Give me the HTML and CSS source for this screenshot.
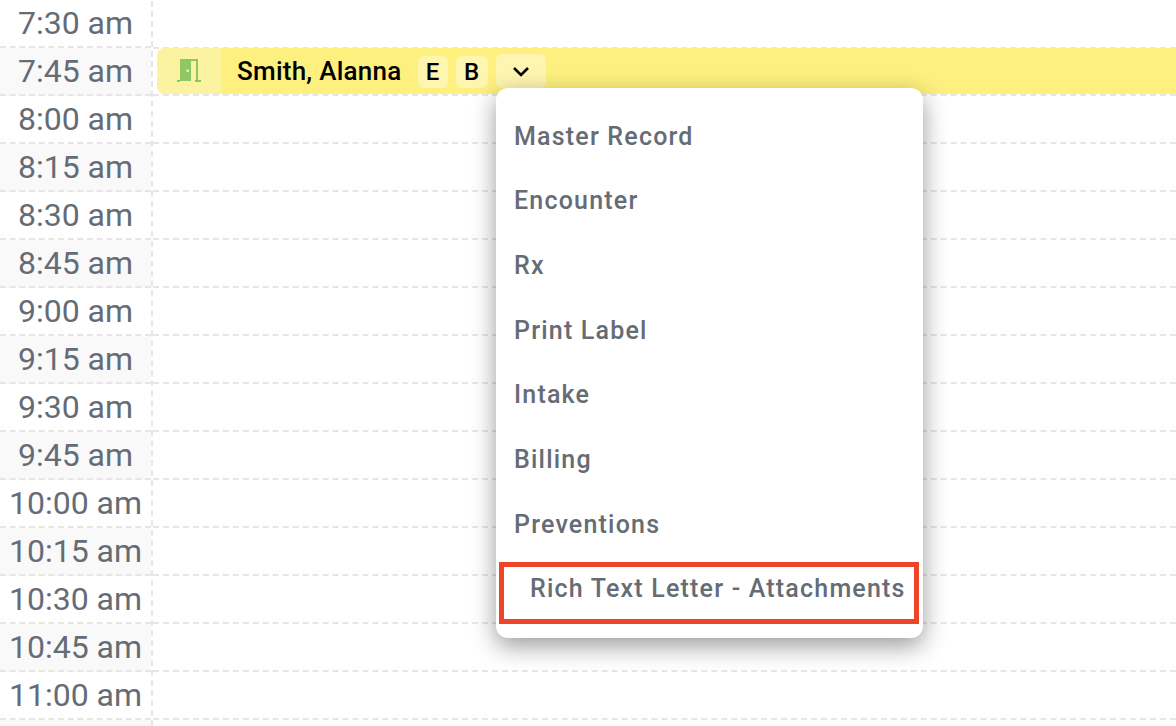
FILE: index.html
```html
<!DOCTYPE html>
<html>
<head>
	<meta charset="UTF-8">
	<title>Schedule</title>
	<link rel="stylesheet" href="styles.css">
</head>
<body>
	<div class="schedule">
		<div class="times">
			<div class="time">7:30 am</div>
			<div class="time alt">7:45 am</div>
			<div class="time">8:00 am</div>
			<div class="time alt">8:15 am</div>
			<div class="time">8:30 am</div>
			<div class="time alt">8:45 am</div>
			<div class="time">9:00 am</div>
			<div class="time alt">9:15 am</div>
			<div class="time">9:30 am</div>
			<div class="time alt">9:45 am</div>
			<div class="time">10:00 am</div>
			<div class="time alt">10:15 am</div>
			<div class="time">10:30 am</div>
			<div class="time alt">10:45 am</div>
			<div class="time">11:00 am</div>
			<div class="time alt"></div>
		</div>
		<div class="slots">
			<div class="slot"></div>
			<div class="slot">
				<div class="event">
					<div class="event-status">
						<svg width="26" height="24" viewBox="0 0 26 24">
							<path fill="#8fc862" d="M4 0h11v22H4z"/>
							<path fill="none" stroke="#8fc862" stroke-width="2" d="M15 1h6v21"/>
							<path fill="#8fc862" d="M1 21h3v2H1zM19 21h6v2h-6z"/>
							<rect x="10.5" y="10.5" width="2.4" height="2.4" fill="#f0f3b0"/>
						</svg>
					</div>
					<div class="event-body">
						<span class="patient">Smith, Alanna</span>
						<span class="tag tag-e">E</span>
						<span class="tag tag-b">B</span>
						<span class="caret">
							<svg width="18" height="12" viewBox="0 0 18 12">
								<path fill="none" stroke="#000" stroke-width="2.6" d="M2 3l7 7 7-7"/>
							</svg>
						</span>
					</div>
					<div class="menu">
						<div class="menu-item">Master Record</div>
						<div class="menu-item">Encounter</div>
						<div class="menu-item">Rx</div>
						<div class="menu-item">Print Label</div>
						<div class="menu-item">Intake</div>
						<div class="menu-item">Billing</div>
						<div class="menu-item">Preventions</div>
						<div class="menu-item highlight">Rich Text Letter - Attachments</div>
					</div>
				</div>
			</div>
			<div class="slot"></div>
			<div class="slot"></div>
			<div class="slot"></div>
			<div class="slot"></div>
			<div class="slot"></div>
			<div class="slot"></div>
			<div class="slot"></div>
			<div class="slot"></div>
			<div class="slot"></div>
			<div class="slot"></div>
			<div class="slot"></div>
			<div class="slot"></div>
			<div class="slot"></div>
		</div>
	</div>
</body>
</html>
```

FILE: styles.css
```css
html {
	background-color: #fff;
}
body {
	margin: 0;
	font-family: "Roboto", "Liberation Sans", sans-serif;
	background-color: #fff;
}
.schedule {
	display: flex;
	height: 726px;
	overflow: hidden;
}
.times {
	width: 151px;
	flex: none;
}
.time {
	box-sizing: border-box;
	height: 48px;
	border-bottom: 2px dashed #e6e6e6;
	text-align: center;
	font-size: 32px;
	line-height: 47px;
	color: #656c75;
}
.time.alt {
	background-color: #f9f9f9;
}
.slots {
	flex: 1;
	margin-top: 1px;
	border-left: 2px dashed #e6e6e6;
}
.slot {
	box-sizing: border-box;
	height: 48px;
	padding-left: 4px;
	border-bottom: 2px dashed #e6e6e6;
}
.event {
	position: relative;
	display: flex;
	height: 46px;
	margin-top: -1px;
	border-radius: 8px 0 0 8px;
	background-color: #fdf07f;
}
.event-status {
	display: flex;
	align-items: center;
	justify-content: center;
	width: 64px;
	border-radius: 8px 0 0 8px;
	background-color: #fcf3a0;
}
.event-body {
	display: flex;
	align-items: center;
	padding-left: 16px;
	color: #000;
}
.patient {
	font-size: 26px;
	font-weight: 500;
	letter-spacing: 0.25px;
	margin-right: 16px;
}
.tag {
	display: flex;
	align-items: center;
	justify-content: center;
	height: 32px;
	margin-top: 2px;
	margin-right: 8px;
	border-radius: 6px;
	background-color: #fdf5b0;
	font-size: 24px;
	font-weight: 500;
}
.tag-e {
	width: 30px;
}
.tag-b {
	width: 32px;
}
.caret {
	display: flex;
	align-items: center;
	justify-content: center;
	width: 50px;
	height: 34px;
	border-radius: 6px;
	background-color: #fdf5b0;
}
.menu {
	position: absolute;
	left: 339px;
	top: 40px;
	box-sizing: border-box;
	width: 427px;
	height: 550px;
	padding-top: 16.75px;
	border-radius: 12px;
	background-color: #fff;
	box-shadow: 0 8px 24px rgba(0, 0, 0, 0.4);
}
.menu-item {
	height: 64.67px;
	padding-left: 18px;
	font-size: 25px;
	font-weight: 500;
	letter-spacing: 1.2px;
	line-height: 64px;
	color: #656c75;
}
.highlight {
	box-sizing: border-box;
	width: 420px;
	height: 62px;
	margin: 4.56px 0 0 3px;
	padding-left: 26px;
	border: 5px solid #ee4427;
	line-height: 44px;
	white-space: nowrap;
}
```
